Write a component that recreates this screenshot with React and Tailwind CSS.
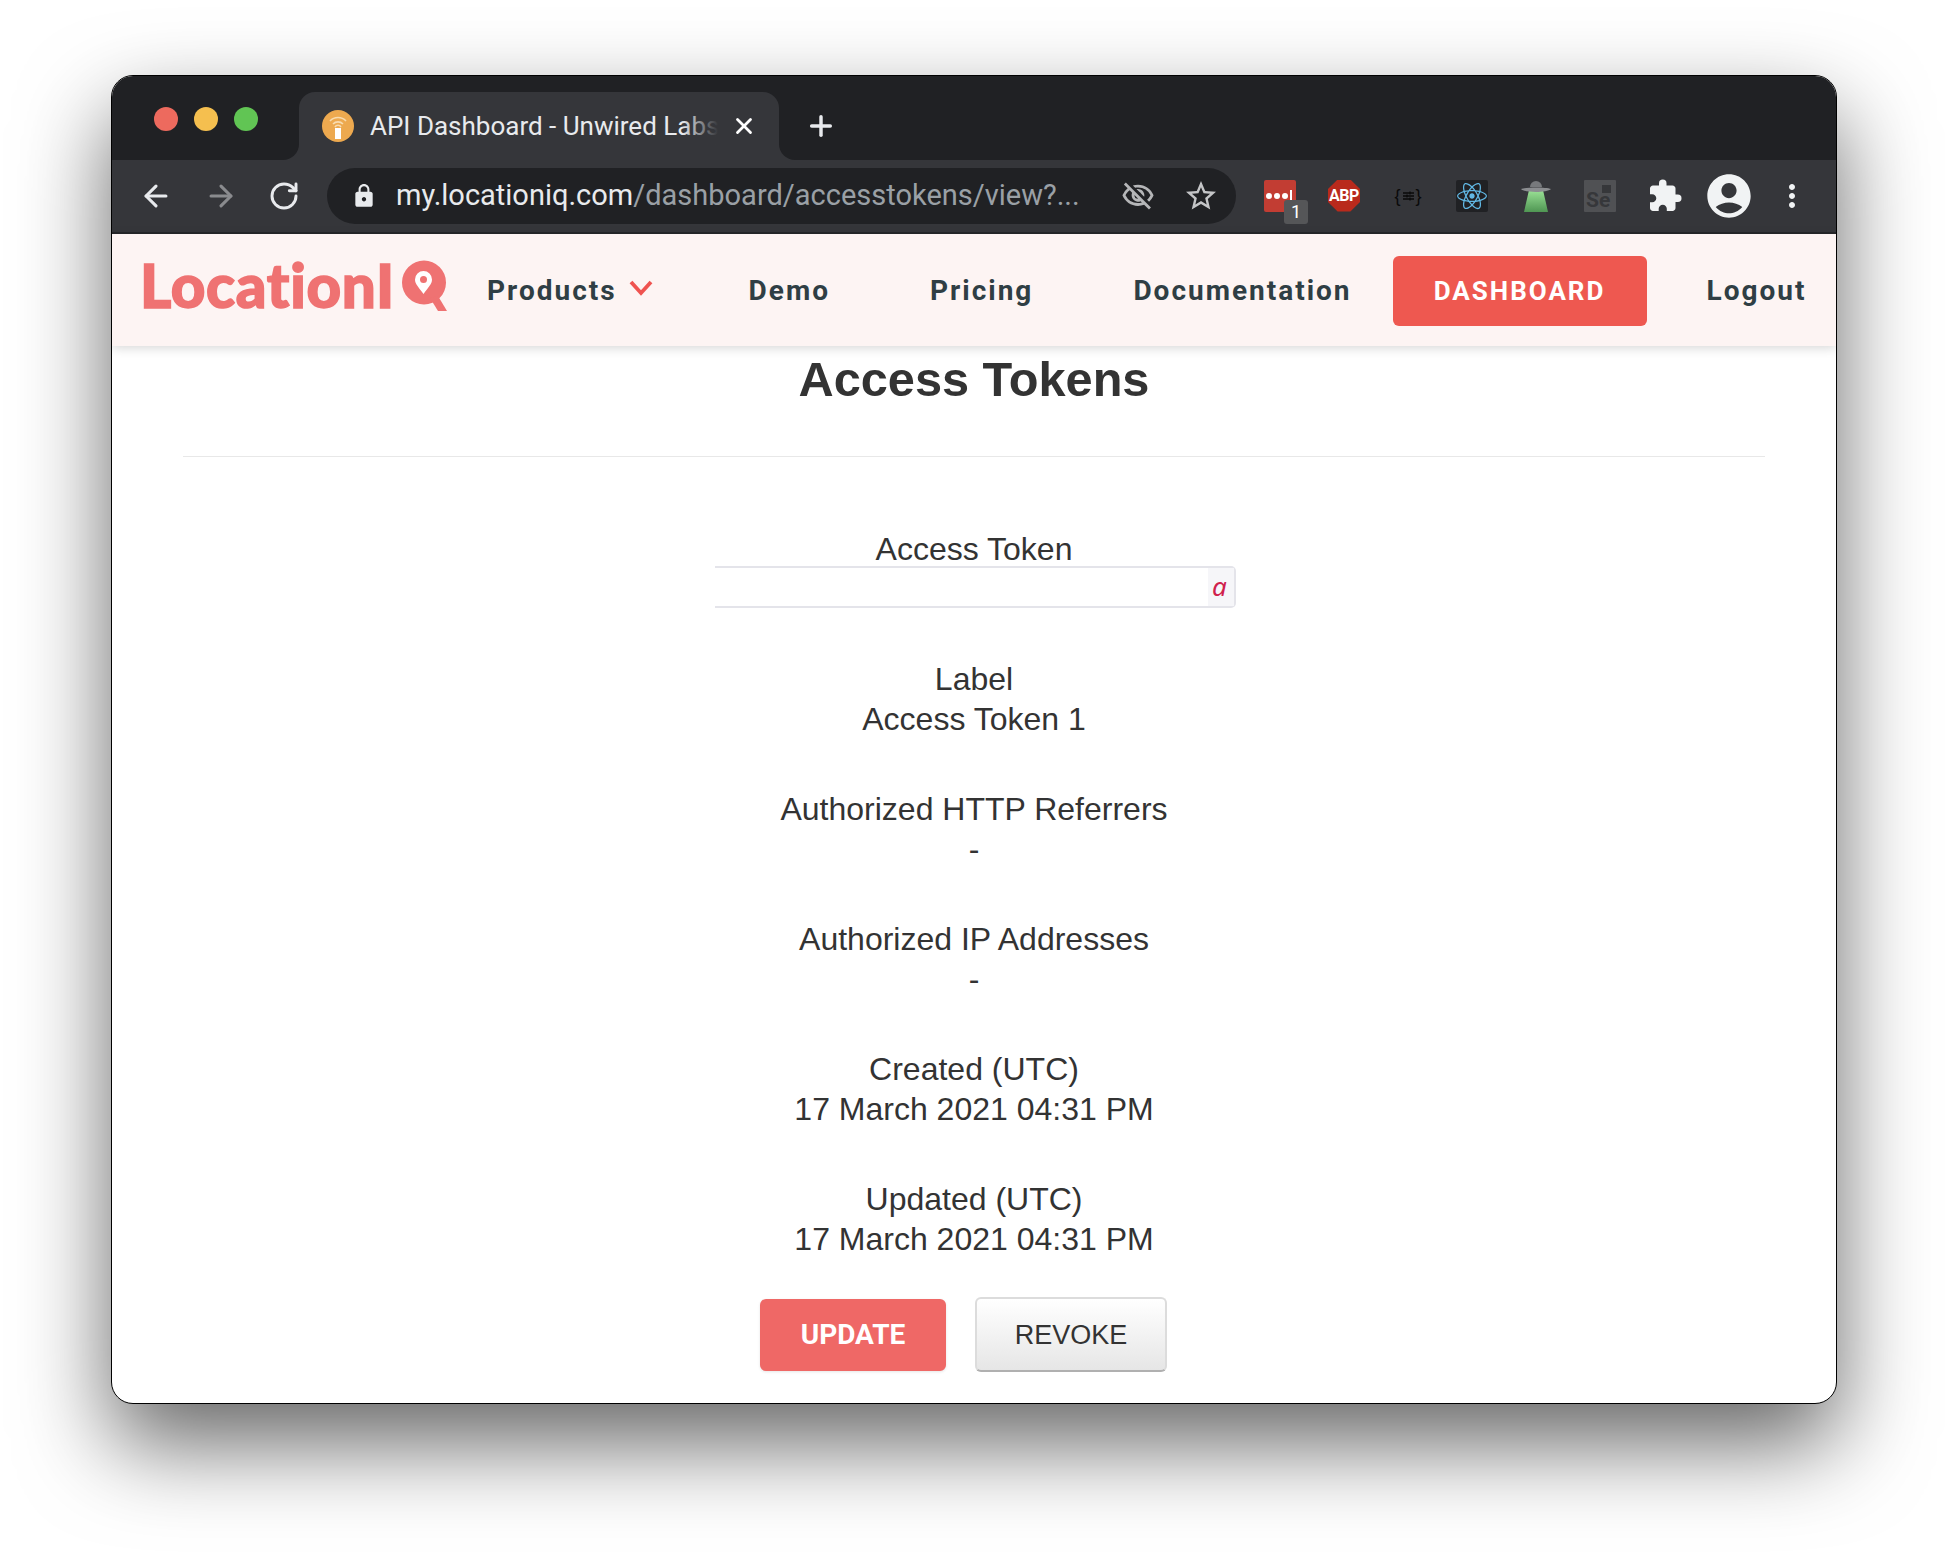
import { ArrowLeft, ArrowRight, RotateCw, Plus, X } from "lucide-react";
import { FaReact } from "react-icons/fa";
import { MdExtension, MdAccountCircle, MdLock, MdMoreVert, MdStarBorder, MdOutlineVisibilityOff } from "react-icons/md";

const blocks = [
  ["Label", "Access Token 1"],
  ["Authorized HTTP Referrers", "-"],
  ["Authorized IP Addresses", "-"],
  ["Created (UTC)", "17 March 2021 04:31 PM"],
  ["Updated (UTC)", "17 March 2021 04:31 PM"],
];

function Favicon() {
  return (
    <svg width="32" height="32" viewBox="0 0 32 32" className="shrink-0">
      <circle cx="16" cy="16" r="16" fill="#eda94f" />
      <path d="M8 11a11 11 0 0 1 16 0M11 14a7 7 0 0 1 10 0M13 17a3.5 3.5 0 0 1 6 0" stroke="#f8dcb0" strokeWidth="1.6" fill="none" />
      <rect x="13" y="18" width="6" height="11" fill="#fff" />
    </svg>
  );
}

function Logo() {
  return (
    <div className="flex items-start w-[310px] h-[60px] text-[#ef7272] blur-[0.6px]">
      <span className="font-['Lato'] font-black text-[60px] leading-[60px] tracking-[0.7px] [-webkit-text-stroke:1.5px_#ef7272] -mt-[6px]">LocationI</span>
      <svg width="48" height="54" viewBox="0 0 48 54" className="ml-auto shrink-0 -mt-[1px]">
        <circle cx="22" cy="22.5" r="22" fill="#ef7272" />
        <path d="M28 38l8 13h9l-9-15z" fill="#ef7272" />
        <path d="M21.5 34c-5-7-8.5-10-8.5-14.5a8.5 8.5 0 0 1 17 0c0 4.500-3.500 7.500-8.500 14.500z" fill="#fff" />
        <circle cx="21.500" cy="19.500" r="3.500" fill="#ef7272" />
      </svg>
    </div>
  );
}

function ExtensionIcons() {
  return (
    <div className="flex items-center ml-[28px] gap-[32px]">
      <div className="relative w-8 h-8 rounded-[2px] bg-[#c23d33] flex items-center justify-center gap-[2px] pr-[2px]">
        <span className="w-[6px] h-[6px] rounded-full bg-white" />
        <span className="w-[6px] h-[6px] rounded-full bg-white" />
        <span className="w-[6px] h-[6px] rounded-full bg-white" />
        <span className="w-[2px] h-[11px] bg-white" />
        <span className="absolute left-[20px] top-[20px] w-6 h-6 rounded-[3px] bg-[#555658] text-white text-[18px] leading-6 text-center font-['Roboto']">1</span>
      </div>
      <div className="w-8 h-8 bg-[#b92a1c] [clip-path:polygon(30%_0,70%_0,100%_30%,100%_70%,70%_100%,30%_100%,0_70%,0_30%)] flex items-center justify-center text-white font-['Roboto'] font-bold text-[16px] tracking-[-0.5px] leading-none">
        ABP
      </div>
      <div className="w-8 h-8 flex items-center justify-center text-[#0a0a0a] text-[18px] font-['Liberation_Sans'] leading-none">
        {"{"}
        <svg width="13" height="12" viewBox="0 0 13 12" className="mx-[1px]">
          <path d="M1 3h11M1 6h11M1 9h11" stroke="#0a0a0a" strokeWidth="1.3" />
          <path d="M8 1.500v3M5 4.500v3M8 7.500v3" stroke="#0a0a0a" strokeWidth="1.3" />
        </svg>
        {"}"}
      </div>
      <div className="w-8 h-8 rounded-[2px] bg-[#202124] flex items-center justify-center">
        <FaReact size={30} color="#61b8e4" />
      </div>
      <svg width="32" height="32" viewBox="0 0 32 32">
        <defs>
          <linearGradient id="beam" x1="0" y1="0" x2="0" y2="1">
            <stop offset="0" stopColor="#9be296" />
            <stop offset="1" stopColor="#4f9653" />
          </linearGradient>
        </defs>
        <path d="M9 10h14l5 22H4z" fill="url(#beam)" />
        <path d="M1 9c5-2 25-2 30 0-4 4-26 4-30 0z" fill="#8b8d90" />
        <path d="M10 7a6 6 0 0 1 12 0z" fill="#77797c" />
      </svg>
      <div className="relative w-8 h-8 bg-[#505154] rounded-[1px] text-[#36373a] font-['Roboto'] font-bold text-[21px] leading-none">
        <span className="absolute left-[2px] bottom-[1px]">Se</span>
        <span className="absolute right-[5px] top-[5px] w-[9px] h-[8px] bg-[#36373a]" />
      </div>
    </div>
  );
}

function NavLink({ className, children }) {
  return <a className={"font-['Roboto'] font-bold text-[28px] tracking-[2px] text-[#2f3e44] " + className}>{children}</a>;
}

export default function App() {
  return (
    <div className="min-h-[1552px] bg-white pl-[111px] pt-[75px] font-['Liberation_Sans',sans-serif]">
      <div className="w-[1726px] h-[1329px] rounded-[22px] border-[1px] border-black bg-white overflow-hidden shadow-[0_40px_90px_rgba(0,0,0,0.6)]">
        {/* Tab strip */}
        <div className="h-[84px] bg-[#202124] flex items-end pl-[42px]">
          <div className="self-start mt-[31px] flex gap-[16px]">
            <span className="w-6 h-6 rounded-full bg-[#ed6a5e]" />
            <span className="w-6 h-6 rounded-full bg-[#f5bf4f]" />
            <span className="w-6 h-6 rounded-full bg-[#61c554]" />
          </div>
          <div className="relative ml-[41px] w-[480px] h-[68px] bg-[#35363a] rounded-t-[16px] flex items-center pl-[23px] pr-[22px]">
            <span className="absolute -left-4 bottom-0 w-4 h-4 bg-[#35363a]">
              <span className="block w-4 h-4 bg-[#202124] rounded-br-[16px]" />
            </span>
            <span className="absolute -right-4 bottom-0 w-4 h-4 bg-[#35363a]">
              <span className="block w-4 h-4 bg-[#202124] rounded-bl-[16px]" />
            </span>
            <Favicon />
            <span className="relative ml-[16px] w-[348px] overflow-hidden whitespace-nowrap font-['Roboto'] text-[26px] text-[#e8eaed]">
              API Dashboard - Unwired Labs
              <span className="absolute right-0 top-0 bottom-0 w-[36px] bg-gradient-to-r from-transparent to-[#35363a]" />
            </span>
            <X className="ml-auto text-white" size={26} strokeWidth={2.6} />
          </div>
          <Plus className="ml-[26px] mb-[18px] text-[#e8eaed]" size={32} strokeWidth={2.6} />
        </div>
        {/* Toolbar */}
        <div className="h-[74px] bg-[#35363a] border-b-[2px] border-[#26272a] flex items-center pl-[27px] pr-[24px] pb-[1px]">
          <ArrowLeft className="text-[#e8eaed]" size={34} strokeWidth={2.2} />
          <ArrowRight className="ml-[31px] text-[#8a8b8e]" size={34} strokeWidth={2.2} />
          <RotateCw className="ml-[30px] text-[#e8eaed]" size={32} strokeWidth={2.2} />
          <div className="ml-[27px] w-[909px] h-[56px] rounded-[28px] bg-[#202124] flex items-center pl-[24px] pr-[17px]">
            <MdLock className="text-[#e8eaed]" size={26} />
            <span className="ml-[19px] font-['Roboto'] text-[29px] whitespace-nowrap text-[#e8eaed]">
              my.locationiq.com<span className="text-[#9aa0a6]">/dashboard/accesstokens/view?...</span>
            </span>
            <MdOutlineVisibilityOff className="ml-auto text-[#b5b6b8]" size={34} />
            <MdStarBorder className="ml-[28px] text-[#c4c5c7]" size={36} />
          </div>
          <ExtensionIcons />
          <MdExtension className="ml-[31px] text-[#f1f3f4]" size={36} />
          <MdAccountCircle className="ml-[20px] text-[#f1f3f4]" size={52} />
          <MdMoreVert className="ml-[19px] text-[#f1f3f4]" size={36} />
        </div>
        {/* Site nav */}
        <div className="relative h-[112px] bg-[#fdf4f3] shadow-[0_2px_10px_rgba(0,0,0,0.16)] flex items-center pl-[28px] pt-[2px]">
          <Logo />
          <NavLink className="ml-[37px]">Products</NavLink>
          <svg width="24" height="18" viewBox="0 0 24 18" className="ml-[12px] -mt-[7px]">
            <path d="M2 3l10 11L22 3" stroke="#ef5350" strokeWidth="3.8" fill="none" />
          </svg>
          <NavLink className="ml-[96px]">Demo</NavLink>
          <NavLink className="ml-[100px]">Pricing</NavLink>
          <NavLink className="ml-[100px]">Documentation</NavLink>
          <a className="ml-[41px] w-[254px] h-[70px] rounded-[6px] bg-[#ee5850] flex items-center justify-center font-['Roboto'] font-bold text-[26px] tracking-[2px] text-white">
            DASHBOARD
          </a>
          <NavLink className="ml-[60px]">Logout</NavLink>
        </div>
        {/* Page body */}
        <div className="px-[71px] text-center text-[#333] text-[32px] leading-[40px]">
          <h1 className="pt-[6px] font-bold text-[48.7px] leading-[54px]">Access Tokens</h1>
          <hr className="mt-[50px] border-t-[1px] border-[#e8e8e8]" />
          <div className="mt-[72px]">Access Token</div>
          <div className="-mt-[3px] ml-[532px] w-[521px] h-[42px] flex justify-end border-y-[2px] border-r-[2px] rounded-r-[5px] border-[#e4e4ea]">
            <code className="w-[26px] pr-[3px] bg-[#f6f6f9] text-[#d0214d] font-['Noto_Sans'] italic text-[26px] leading-[36px]">a</code>
          </div>
          <div className="mt-[51px] flex flex-col gap-[50px]">
            {blocks.map(([label, value]) => (
              <div key={label}>
                <div>{label}</div>
                <div>{value}</div>
              </div>
            ))}
          </div>
          <div className="mt-[38px] ml-[577px] flex items-center gap-[29px]">
            <button className="w-[186px] h-[72px] rounded-[6px] bg-[#ef6866] font-['Roboto'] font-bold text-[28px] text-white shadow-[0_1px_3px_rgba(0,0,0,0.1)]">UPDATE</button>
            <button className="w-[192px] h-[75px] rounded-[6px] border-[2px] border-[#dcdcdc] border-b-[#b0b0b0] bg-gradient-to-b from-white to-[#e6e6e6] text-[27px] text-[#333]">REVOKE</button>
          </div>
        </div>
      </div>
    </div>
  );
}
